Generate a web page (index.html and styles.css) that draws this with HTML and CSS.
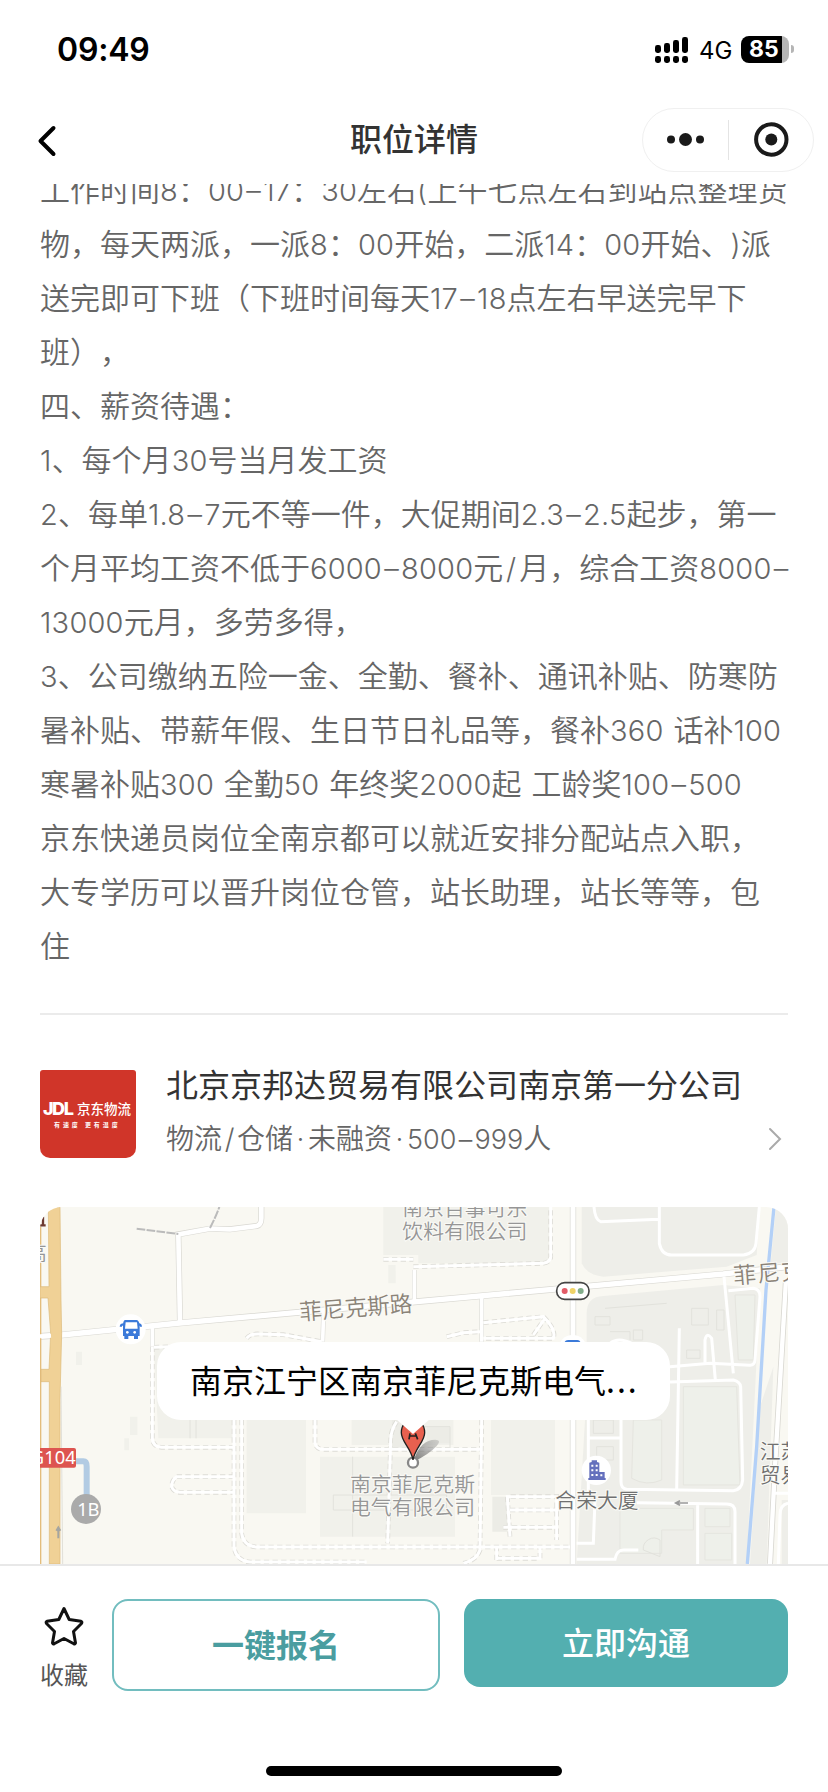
FILE: index.html
```
<!DOCTYPE html>
<html lang="zh-CN">

<head>
  <meta charset="utf-8">
  <title>职位详情</title>
  <link rel="stylesheet" href="styles.css">
</head>

<body>
  <div id="statusBar">
    <span class="time">09:49</span>
    <div class="statusIcons">
      <svg class="signal" width="33" height="27" viewBox="0 0 33 27">
        <g fill="#000">
          <rect x="0" y="9" width="6" height="8" rx="2.4" />
          <rect x="9" y="7" width="6" height="10" rx="2.4" />
          <rect x="18" y="4" width="6" height="13" rx="2.4" />
          <rect x="27" y="1" width="6" height="16" rx="2.4" />
          <rect x="0" y="20" width="6" height="7" rx="2.4" />
          <rect x="9" y="20" width="6" height="7" rx="2.4" />
          <rect x="18" y="20" width="6" height="7" rx="2.4" />
          <rect x="27" y="20" width="6" height="7" rx="2.4" />
        </g>
      </svg>
      <span class="network">4G</span>
      <div class="battery"><span>85</span></div>
      <i class="batteryTip"></i>
    </div>
  </div>

  <div id="navBar">
    <svg class="back" width="22" height="34" viewBox="0 0 22 34">
      <path d="M17.500 4L4.500 17L17.500 30" fill="none" stroke="#000" stroke-width="4" stroke-linecap="round" stroke-linejoin="round" />
    </svg>
    <h1>职位详情</h1>
    <div class="capsule">
      <svg width="170" height="62" viewBox="0 0 170 62">
        <g fill="#1a1a1a">
          <circle cx="28" cy="30.500" r="4" />
          <circle cx="42.500" cy="30.500" r="6.500" />
          <circle cx="57" cy="30.500" r="4" />
          <circle cx="128.300" cy="30.500" r="6" />
        </g>
        <path d="M85.500 11V51" stroke="#e4e4e4" />
        <circle cx="128.300" cy="30.500" r="15.200" fill="none" stroke="#1a1a1a" stroke-width="4" />
      </svg>
    </div>
  </div>

  <div id="content">
    <div class="desc">
      <p>工作时间<b>8</b>：<b>00<i>–</i>17</b>：<b>30</b>左右<b>(</b>上午七点左右到站点整理货</p>
      <p>物，每天两派，一派<b>8</b>：<b>00</b>开始，二派<b>14</b>：<b>00</b>开始、<b>)</b>派</p>
      <p>送完即可下班（下班时间每天<b>17<i>–</i>18</b>点左右早送完早下</p>
      <p>班），</p>
      <p>四、薪资待遇：</p>
      <p><b>1</b>、每个月<b>30</b>号当月发工资</p>
      <p><b>2</b>、每单<b>1.8<i>–</i>7</b>元不等一件，大促期间<b>2.3<i>–</i>2.5</b>起步，第一</p>
      <p>个月平均工资不低于<b>6000<i>–</i>8000</b>元<b><i class="slash">/</i></b>月，综合工资<b>8000<i>–</i></b></p>
      <p><b>13000</b>元月，多劳多得，</p>
      <p><b>3</b>、公司缴纳五险一金、全勤、餐补、通讯补贴、防寒防</p>
      <p>暑补贴、带薪年假、生日节日礼品等，餐补<b>360 </b>话补<b>100</b></p>
      <p>寒暑补贴<b>300 </b>全勤<b>50 </b>年终奖<b>2000</b>起<b> </b>工龄奖<b>100<i>–</i>500</b></p>
      <p>京东快递员岗位全南京都可以就近安排分配站点入职，</p>
      <p>大专学历可以晋升岗位仓管，站长助理，站长等等，包</p>
      <p>住</p>
    </div>

    <div class="company">
      <div class="logo">
        <div class="logoMain"><em>JDL</em><span>京东物流</span></div>
        <div class="logoSub">有速度 更有温度</div>
      </div>
      <div class="companyInfo">
        <h2>北京京邦达贸易有限公司南京第一分公司</h2>
        <div class="tags">物流<i>/</i>仓储<i>·</i>未融资<i>·</i><b>500<i>–</i>999</b>人</div>
      </div>
      <svg class="arrow" width="14" height="24" viewBox="0 0 14 24">
        <path d="M2 2L12 12L2 22" fill="none" stroke="#aaa" stroke-width="2" stroke-linecap="round" />
      </svg>
    </div>

    <div class="map">
      <svg width="748" height="357" viewBox="30 21 2244 1071">
        <rect x="30" y="21" width="2244" height="1071" fill="#f9f8f2" />

        <!-- blocks -->
        <g fill="#f1f1eb">
          <path d="M1060 21H1560V190H1165V165H1060Z" />
          <path d="M372 440H615V715H385Z" />
          <path d="M650 650H828V940H650Z" />
          <path d="M870 770H1275V1010H870Z" />
          <path d="M965 650H1270V735H965Z" />
          <path d="M1383 655H1575V885H1383Z" />
          <path d="M138 455h18v40h-18zM300 650h22v55h-22zM283 715h14v36h-14zM1075 195h22v55h-22z" />
        </g>
        <g fill="#eeeee9">
          <path d="M1655 21H2190L2180 165L2090 200L1720 230Q1670 225 1655 190Z" />
          <path d="M1670 420V340Q1670 290 1720 288L2080 255L2190 265L2150 1092H1640L1665 660Z" />
          <path d="M2238 21H2274V190H2222Z" />
          <path d="M2190 620L2230 500L2210 1092H2160Z" />
          <path d="M2255 900H2274V1092H2255Z" />
        </g>
        <path d="M1085 655h85v90h-85zM1190 680h70v50h-70zM1387 890h45v105h-45z" fill="#ecece6" />
        <g fill="#eef0ea" stroke="#e5e5df" stroke-width="3">
          <path d="M1960 560H2120L2130 855H1960Z" />
          <path d="M1810 660H1895V840Q1850 860 1805 835Z" />
          <path d="M2115 285h60l-5 195h-45z" />
          <path d="M1770 925H1990V990H1895V1060H1770Z" />
          <path d="M2025 925h75v55h-75zM2025 1000h80v80h-80z" />
        </g>
        <g fill="none" stroke="#e2e2dc" stroke-width="3">
          <path d="M1725 325L1910 310M1985 325h50v50h-50zM1695 350h45v25h-45zM1810 390h28v30h-28zM1740 395h60v25M1970 450h40v25h-40zM2060 330h22v60h-22z" />
          <path d="M1690 660h60v40h-60zM1700 740h50v40h-50zM480 660V715M498 660V715M968 770V1010M910 885H1250V930H910ZM1165 680h95v65M1840 1050a32 32 0 0 1 50 -30v50z" />
        </g>

        <!-- road edges, then the road surface over them -->
        <g fill="none" stroke="#d9d8d2" stroke-width="17">
          <path d="M30 409L62 407M95 405L450 369L1170 304L2080 222L2274 200" stroke-width="20" />
          <path d="M450 365L445 103L540 86L600 88L680 78Q694 75 694 55V21" stroke-width="18" />
          <path d="M367 375V440M1153 300V210M881 330L878 425M1355 290V425" stroke-width="14" />
          <path d="M1629 21V1092" stroke-width="19" />
          <path d="M2268 240L2235 800L2220 1092" stroke-width="18" />
        </g>
        <g fill="none" stroke="#fff" stroke-width="15">
          <path d="M30 409L62 407M95 405L450 369L1170 304L2080 222L2274 200" stroke-width="16" />
          <path d="M450 365L445 103L540 86L600 88L680 78Q694 75 694 55V21" stroke-width="14" />
          <path d="M367 375V440M1153 300V210M881 330L878 425M1355 290V425" stroke-width="11" />
          <path d="M1629 21V1092" />
          <path d="M2268 240L2235 800L2220 1092" stroke-width="13" />
        </g>
        <path d="M320 86L445 102M540 84Q560 45 568 21" fill="none" stroke="#bbb" stroke-width="6" stroke-dasharray="26 4" />

        <!-- inner lanes -->
        <g fill="none" stroke="#fff" stroke-width="9">
          <path d="M1692 21Q1695 60 1712 65L1885 58M1888 21V130Q1895 165 1925 165H2140Q2175 160 2178 130L2188 21" />
          <path d="M2082 230L2110 520M2095 272L2170 265Q2190 268 2190 290L2175 480Q2174 495 2160 496L2040 490L1920 500M1920 546L2110 540Q2130 545 2132 560L2138 840Q2135 870 2110 872L1790 868Q1773 865 1773 845V660" />
          <path d="M1948 385L1940 870M2056 540L2045 415Q2030 395 2025 420V488M1675 660V900M1675 714H1770M1820 908L2090 912Q2115 912 2115 935V1092M2003 915V1092M1695 900L1690 1030H1640M1640 1078H1755Q1760 1050 1780 1050H1825" />
          <path d="M2274 910Q2250 915 2250 945L2245 1092M2230 880H2274M1740 430Q1765 410 1805 430" />
        </g>

        <!-- footpaths -->
        <g fill="none">
          <path stroke="#dddcd6" stroke-width="14" stroke-dasharray="16 10" d="M367 440V715Q368 740 395 742H612M372 442L420 440M650 415Q660 400 690 402L760 404L875 425M612 830H440Q425 840 425 860Q430 876 450 877H612M612 660V1040Q618 1082 660 1086H1010M635 660V1000Q640 1038 680 1041H1620M855 660V730Q860 748 880 748H1355M1100 665Q1083 690 1082 720L1073 1030M1060 178H1150M1150 200L1540 190Q1565 185 1562 165V21M1250 410L1300 398L1350 395M1360 368L1540 350Q1580 390 1570 415H1360M1510 405L1545 355M1355 660L1350 1050Q1340 1080 1300 1090M1440 1010L1432 890H1580V1020M1440 930H1580M1420 982H1580M1400 1080V1040M1400 1075H1530V1040" />
          <path stroke="#fff" stroke-width="9" d="M367 440V715Q368 740 395 742H612M372 442L420 440M650 415Q660 400 690 402L760 404L875 425M612 830H440Q425 840 425 860Q430 876 450 877H612M612 660V1040Q618 1082 660 1086H1010M635 660V1000Q640 1038 680 1041H1620M855 660V730Q860 748 880 748H1355M1100 665Q1083 690 1082 720L1073 1030M1060 178H1150M1150 200L1540 190Q1565 185 1562 165V21M1250 410L1300 398L1350 395M1360 368L1540 350Q1580 390 1570 415H1360M1510 405L1545 355M1355 660L1350 1050Q1340 1080 1300 1090M1440 1010L1432 890H1580V1020M1440 930H1580M1420 982H1580M1400 1080V1040M1400 1075H1530V1040" />
        </g>

        <!-- river -->
        <path d="M2232 21L2208 270L2180 740L2152 1092" fill="none" stroke="#b3d0f7" stroke-width="10" />

        <!-- highway -->
        <path d="M32 80V1092" stroke="#e3bd7c" stroke-width="4" />
        <path d="M30 260H57L55 21H90L93 300L95 400L90 600V1092H58V545H33V508H57L62 400L54 294H30Z" fill="#f0d196" stroke="#dcb978" stroke-width="2" />
        <path d="M30 409L63 407" stroke="#fff" stroke-width="12" />
        <path d="M93 560L98 1092" fill="none" stroke="#d5d3cc" stroke-width="2" />
        <path d="M85 1015V985M79 992L85 982L91 992" fill="none" stroke="#a5a5a0" stroke-width="6" />

        <path d="M138 784H160Q170 784 170 800V885" fill="none" stroke="#b2cbe3" stroke-width="18" />
        <rect x="10" y="744" width="128" height="59" rx="6" fill="#dd5450" />
        <circle cx="168" cy="927" r="45" fill="#aaa" />
        <g class="mapSign">
          <text x="137" y="792" text-anchor="end">G104</text>
          <text x="175" y="947" text-anchor="middle">1B</text>
        </g>
        <path d="M30 76H47M39 50V74" stroke="#6d3b32" stroke-width="7" />

        <!-- bus stops -->
        <circle cx="302" cy="388" r="45" fill="#fff" />
        <g fill="#3b7ad9">
          <path d="M285 360H320Q328 362 329 376V408H279V376Q279 362 285 360Z" />
          <path d="M269 380Q270 370 281 370V377H276V380ZM336 380Q335 370 326 370V377H330V380ZM283 405h12v12h-12zM312 405h12v12h-12z" />
        </g>
        <path d="M287 367H321L323 386H285Z" fill="#fff" />
        <circle cx="292" cy="397" r="4" fill="#fff" />
        <circle cx="314" cy="397" r="4" fill="#fff" />
        <circle cx="1628" cy="448" r="43" fill="#fff" />
        <path d="M1603 430Q1605 420 1615 420H1642Q1650 420 1652 430Z" fill="#3b7ad9" />

        <!-- traffic light -->
        <rect x="1580" y="248" width="97" height="50" rx="24" fill="#fff" stroke="#444" stroke-width="5" />
        <circle cx="1604" cy="273" r="9" fill="#e25c68" />
        <circle cx="1628" cy="273" r="9" fill="#f0d368" />
        <circle cx="1652" cy="273" r="9" fill="#82ad8a" />

        <!-- building -->
        <circle cx="1699" cy="811" r="44" fill="#fff" />
        <path d="M1678 788L1685 786V781H1701V786L1708 788V816H1724V834H1727V840H1675V834H1678Z" fill="#6470bd" />
        <g fill="#fff">
          <path d="M1684 794h6v6h-6zM1697 794h6v6h-6zM1684 808h6v6h-6zM1697 808h6v6h-6zM1684 822h6v6h-6zM1697 822h6v6h-6zM1711 823h6v6h-6z" />
        </g>

        <g class="mapText">
          <text x="1117" y="48">南京百事可乐</text>
          <text x="1117" y="118">饮料有限公司</text>
          <text x="960" y="877">南京菲尼克斯</text>
          <text x="960" y="945">电气有限公司</text>
          <text x="-12" y="182">高</text>
          <text class="road" transform="translate(810 361) rotate(-4.500)">菲尼克斯路</text>
          <text class="road" transform="translate(2112 252) rotate(-4.500)" letter-spacing="4">菲尼克</text>
          <text class="dark" x="1576" y="925">合荣大厦</text>
          <text class="dark" x="2189" y="778">江苏</text>
          <text class="dark" x="2189" y="848">贸易</text>
        </g>
        <path d="M1974 909H1937M1950 902L1937 909L1950 916" fill="none" stroke="#999" stroke-width="5" />

        <!-- marker -->
        <defs>
          <linearGradient id="shade" x1="0" y1="1" x2="1" y2="0">
            <stop offset="0" stop-color="#555" stop-opacity=".8" />
            <stop offset="1" stop-color="#999" stop-opacity=".35" />
          </linearGradient>
        </defs>
        <path d="M1150 785Q1165 730 1205 720Q1240 715 1220 738Q1195 765 1150 785Z" fill="url(#shade)" />
        <circle cx="1149" cy="788" r="15" fill="#fff" stroke="#888" stroke-width="7" />
        <path d="M1149 780C1144 745 1114 725 1114 698Q1114 664 1149 662Q1184 664 1184 698C1184 725 1154 745 1149 780Z" fill="#e8604f" stroke="#222" stroke-width="4" />
        <path d="M1137 718L1140 700M1163 718L1156 700M1139 708L1160 708" stroke="#222" stroke-width="5" />
      </svg>
      <div class="callout">南京江宁区南京菲尼克斯电气<span>...</span></div>
    </div>
  </div>

  <div id="footer">
    <div class="actions">
      <div class="fav">
        <svg width="42" height="42" viewBox="0 0 42 42">
          <path d="M21 3.500L26.200 14.500L38 16.300Q39.500 17 38.500 18.500L30.500 26.500L32.500 38Q32 39.300 30.800 38.800L21 33.500L11.200 38.800Q10 39.300 9.500 38L11.500 26.500L3.500 18.500Q2.500 17 4 16.300L15.800 14.500Z" fill="none" stroke="#111" stroke-width="3" stroke-linejoin="round" />
        </svg>
        <span>收藏</span>
      </div>
      <a href="#" class="btn btnApply">一键报名</a>
      <a href="#" class="btn btnChat">立即沟通</a>
    </div>
    <div class="homeBar"></div>
  </div>
</body>

</html>
```
FILE: styles.css
```
* {
  box-sizing: border-box;
}

body {
  margin: 0;
  width: 828px;
  height: 1792px;
  display: flex;
  flex-direction: column;
  overflow: hidden;
  background: #fff;
  color: #333;
  font-family: "Noto Sans CJK SC", sans-serif;
  text-spacing-trim: space-all;
}

h1,
h2,
p {
  margin: 0;
  font-weight: normal;
}

svg {
  display: block;
  flex: none;
}

#statusBar {
  height: 98px;
  flex: none;
  display: flex;
  align-items: center;
  justify-content: space-between;
  padding: 0 34px 0 57px;
  color: #000;
  font-family: Inter, sans-serif;
}

.time {
  font-size: 32px;
  font-weight: 600;
  letter-spacing: -0.2px;
}

.statusIcons {
  display: flex;
  align-items: center;
}

.network {
  margin: 2px 10px 0 11px;
  font-size: 24px;
  width: 32px;
}

.battery {
  width: 48px;
  height: 27px;
  border-radius: 8px;
  background: linear-gradient(to right, #000 41px, #b5b5b5 41px);
  color: #fff;
  font-size: 23px;
  font-weight: 700;
  line-height: 27px;
  padding-left: 8px;
}

.batteryTip {
  width: 3px;
  height: 8px;
  margin-left: 2px;
  border-radius: 0 4px 4px 0;
  background: #b5b5b5;
}

#navBar {
  height: 86px;
  flex: none;
  display: flex;
  align-items: flex-start;
  justify-content: space-between;
  padding: 10px 14px 0 36px;
}

.back {
  margin-top: 16px;
}

#navBar h1 {
  font-size: 32px;
  line-height: 58px;
  font-weight: 500;
  margin-left: 128px;
}

.capsule {
  width: 172px;
  height: 64px;
  border: 1px solid #f0f0f0;
  border-radius: 32px;
}

#content {
  height: 1380px;
  flex: none;
  overflow: hidden;
  padding: 0 40px;
}

.desc {
  margin-top: -23px;
  padding-bottom: 42px;
  border-bottom: 2px solid #ebebeb;
}

.desc p {
  height: 54px;
  line-height: 54px;
  font-size: 30px;
  color: #666;
  font-weight: 350;
  white-space: pre;
}

.desc b,
.tags b {
  font-family: Inter, sans-serif;
  font-size: 29px;
  font-weight: 300;
  letter-spacing: 0.2px;
  word-spacing: 1.5px;
}

.desc i {
  display: inline-block;
  width: 19px;
  font-style: normal;
  text-align: center;
}

.desc .slash {
  width: 16px;
}

.company {
  display: flex;
  height: 192px;
  padding-top: 55px;
}

.logo {
  width: 96px;
  height: 88px;
  flex: none;
  border-radius: 3px 3px 10px 10px;
  background: #d03529;
  color: #fff;
  padding-top: 28px;
  overflow: hidden;
}

.logoMain {
  display: flex;
  align-items: center;
  height: 22px;
  padding-left: 3px;
  white-space: nowrap;
}

.logoMain em {
  width: 34px;
  font: normal 800 18px/22px Inter, sans-serif;
  letter-spacing: -1.5px;
}

.logoMain span {
  font-size: 13.5px;
  font-weight: 500;
  line-height: 22px;
  margin-top: -2px;
}

.logoSub {
  padding-left: 14px;
  font-size: 6px;
  font-weight: 700;
  line-height: 10px;
  letter-spacing: 2.9px;
  white-space: nowrap;
}

.companyInfo {
  flex: 1;
  margin-left: 30px;
}

.companyInfo h2 {
  margin-top: -11px;
  font-size: 32px;
  line-height: 48px;
  white-space: nowrap;
}

.tags {
  margin-top: 9px;
  font-size: 28px;
  line-height: 42px;
  font-weight: 350;
  color: #666;
}

.tags b {
  font-size: 27px;
  letter-spacing: 0;
}

.tags i {
  display: inline-block;
  width: 15px;
  text-align: center;
  font-family: Inter, sans-serif;
  font-style: normal;
}

.tags b i {
  width: 18px;
}

.arrow {
  margin: 57px 6px 0 0;
}

.map {
  position: relative;
  height: 357px;
  border-radius: 22px 22px 0 0;
  overflow: hidden;
}

.mapText {
  font-size: 62.5px;
  font-weight: 350;
  fill: #969696;
  paint-order: stroke;
  stroke: #fafaf6;
  stroke-width: 6px;
}

.mapText .road {
  font-size: 68px;
  fill: #8b8378;
}

.mapText .dark {
  fill: #707070;
}

.mapSign {
  font-family: "Noto Sans", sans-serif;
  font-size: 55px;
  fill: #fff;
}

.callout {
  position: absolute;
  left: 117px;
  top: 135px;
  width: 513px;
  height: 78px;
  padding-left: 33px;
  border-radius: 24px;
  background: #fff;
  color: #000;
  font-size: 32px;
  line-height: 74px;
  white-space: nowrap;
}

.callout span {
  letter-spacing: 2px;
}

.callout::after {
  content: "";
  position: absolute;
  left: 239px;
  top: 77px;
  border: solid transparent;
  border-width: 15px 17px 0;
  border-top-color: #fff;
}

#footer {
  flex: 1;
  border-top: 2px solid #e8e8e8;
  padding: 33px 40px 0;
}

.actions {
  display: flex;
  align-items: flex-start;
  height: 167px;
}

.fav {
  width: 72px;
  flex: none;
  padding-top: 6px;
  font-size: 24px;
  line-height: 36px;
  color: #555;
}

.fav svg {
  margin: 0 0 9px 3px;
}

.btn {
  border-radius: 16px;
  font-size: 32px;
  font-weight: 500;
  text-align: center;
  text-decoration: none;
}

.btnApply {
  width: 328px;
  height: 92px;
  line-height: 85px;
  border: 2px solid #72bdbf;
  color: #4a9da0;
  font-weight: 700;
}

.btnChat {
  width: 324px;
  height: 88px;
  line-height: 84px;
  margin-left: 24px;
  background: #53afb0;
  color: #fff;
}

.homeBar {
  width: 296px;
  height: 10px;
  margin: 0 auto;
  border-radius: 5px;
  background: #000;
}
```
